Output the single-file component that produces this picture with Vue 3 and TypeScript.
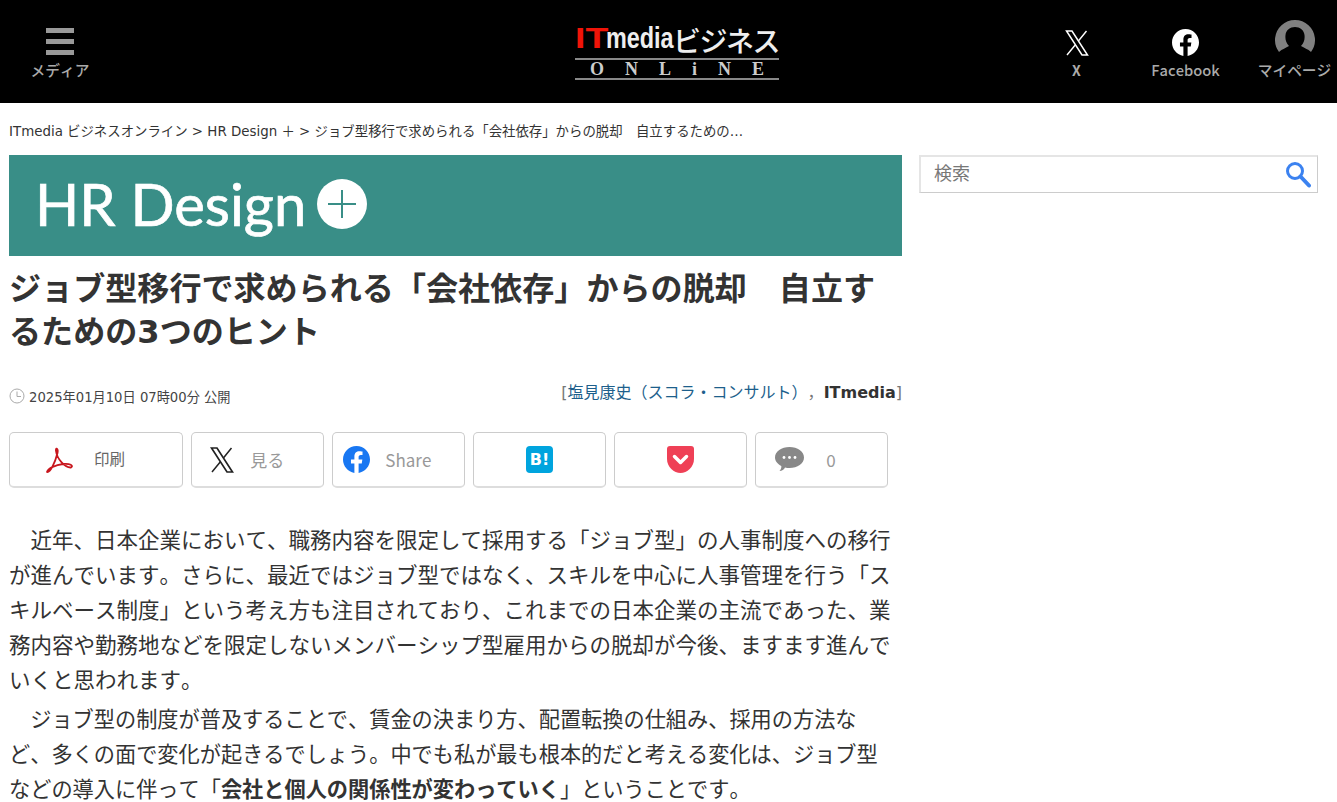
<script setup lang="ts">
const fbPath = 'M24 12.073c0-6.627-5.373-12-12-12s-12 5.373-12 12c0 5.99 4.388 10.954 10.125 11.854v-8.385H7.078v-3.47h3.047V9.43c0-3.007 1.792-4.669 4.533-4.669 1.312 0 2.686.235 2.686.235v2.953H15.83c-1.491 0-1.956.925-1.956 1.874v2.25h3.328l-.532 3.47h-2.796v8.385C19.612 23.027 24 18.062 24 12.073z'
</script>

<template>
  <div class="page">
    <header class="header">
      <div class="nav-item menu">
        <div class="burger"><i></i><i></i><i></i></div>
        <span class="nav-label">メディア</span>
      </div>
      <div class="logo">
        <div class="logo-top"><span class="logo-it">IT</span><span class="logo-media">media</span><span class="logo-biz">ビジネス</span></div>
        <div class="logo-online"><span>O</span><span>N</span><span>L</span><span>i</span><span>N</span><span>E</span></div>
      </div>
      <div class="nav-right">
        <div class="nav-item nav-x">
          <svg class="nav-icon" width="24" height="26" viewBox="0 0 24 26" fill="none" stroke="#fff">
            <path d="M1.500 1H7L22.500 25H17Z" stroke-width="1.500" />
            <path d="M21.500 1L13.600 10.800M10.200 15L2 25" stroke-width="1.400" />
          </svg>
          <span class="nav-label strong">X</span>
        </div>
        <div class="nav-item nav-fb">
          <svg class="nav-icon" width="27" height="27" viewBox="0 0 24 24"><path :d="fbPath" fill="#fff" /></svg>
          <span class="nav-label">Facebook</span>
        </div>
        <div class="nav-item nav-my">
          <svg class="nav-icon" width="40" height="36" viewBox="0 0 40 36">
            <path d="M4 32A20 20 0 1 1 36 32C33 29 29 28 26 26C29 23 30 19 29.500 15C29 10 25 7 20 7S11 10 10.500 15C10 19 11 23 14 26C11 28 7 29 4 32Z" fill="#808080" />
          </svg>
          <span class="nav-label">マイページ</span>
        </div>
      </div>
    </header>

    <nav class="crumbs">ITmedia ビジネスオンライン &gt; HR Design ＋ &gt; ジョブ型移行で求められる「会社依存」からの脱却　自立するための…</nav>

    <div class="columns">
      <main class="article">
        <div class="banner">
          <span class="banner-text">HR Design</span>
          <svg width="50" height="50" viewBox="0 0 50 50">
            <circle cx="25" cy="25" r="25" fill="#fff" />
            <path d="M25 11V39M11 25H39" stroke="#398e87" stroke-width="2" />
          </svg>
        </div>

        <h1 class="title">ジョブ型移行で求められる「会社依存」からの脱却　自立するための3つのヒント</h1>

        <div class="meta">
          <div class="date">
            <svg width="16" height="16" viewBox="0 0 16 16" fill="none" stroke="#aaa" stroke-width="1">
              <circle cx="8" cy="8" r="7" />
              <path d="M8 3.500V8.500H12" />
            </svg>
            <span>2025年01月10日 07時00分 公開</span>
          </div>
          <div class="author">[<a>塩見康史（スコラ・コンサルト）</a>，<b>ITmedia</b>]</div>
        </div>

        <div class="shares">
          <div class="share share-print">
            <svg width="28" height="28" viewBox="0 0 28 28" fill="none" stroke="#c8161d" stroke-width="1.800" stroke-linejoin="round">
              <path d="M2 26C5 27 10 17 12.500 7C13.500 2 10.500 1 11 5C12 13 20 22 26 21.500C29 20 25 17 18 18C11 19 3 22 2 26Z" />
            </svg>
            <span class="share-text up">印刷</span>
          </div>
          <div class="share share-x">
            <svg width="24" height="26" viewBox="0 0 24 26" fill="none" stroke="#222">
              <path d="M1.500 1H7L22.500 25H17Z" stroke-width="1.700" />
              <path d="M21.500 1L13.600 10.800M10.200 15L2 25" stroke-width="1.500" />
            </svg>
            <span class="share-text light">見る</span>
          </div>
          <div class="share share-fb">
            <svg width="27" height="27" viewBox="0 0 24 24"><path :d="fbPath" fill="#1877f2" /></svg>
            <span class="share-text light">Share</span>
          </div>
          <div class="share center">
            <div class="hatena">B!</div>
          </div>
          <div class="share center">
            <svg width="27" height="27" viewBox="0 0 27 27">
              <path d="M0 3A3 3 0 0 1 3 0H24A3 3 0 0 1 27 3V13C27 21 20 27 13.500 27S0 21 0 13Z" fill="#ef4056" />
              <path d="M7.500 10.500L13.500 16.500L19.500 10.500" fill="none" stroke="#fff" stroke-width="3.500" stroke-linecap="round" stroke-linejoin="round" />
            </svg>
          </div>
          <div class="share share-comment">
            <svg width="29" height="27" viewBox="0 0 29 27">
              <path d="M14.500 1C22.500 1 29 5.500 29 11.500S22.500 22 14.500 22C13 22 11.500 21.900 10 21.500C9 23.500 7 25 4.500 25C6 23.500 6.500 21.500 6.300 20C2.500 18 0 15 0 11.500C0 5.500 6.500 1 14.500 1Z" fill="#888" />
              <circle cx="9" cy="11.500" r="1.400" fill="#fff" /><circle cx="14.500" cy="11.500" r="1.400" fill="#fff" /><circle cx="20" cy="11.500" r="1.400" fill="#fff" />
            </svg>
            <span class="share-text light">0</span>
          </div>
        </div>

        <div class="body-text">
          <p class="lead">　近年、日本企業において、職務内容を限定して採用する「ジョブ型」の人事制度への移行が進んでいます。さらに、最近ではジョブ型ではなく、スキルを中心に人事管理を行う「スキルベース制度」という考え方も注目されており、これまでの日本企業の主流であった、業務内容や勤務地などを限定しないメンバーシップ型雇用からの脱却が今後、ますます進んでいくと思われます。</p>
          <p class="next">　ジョブ型の制度が普及することで、賃金の決まり方、配置転換の仕組み、採用の方法など、多くの面で変化が起きるでしょう。中でも私が最も根本的だと考える変化は、ジョブ型などの導入に伴って「<b>会社と個人の関係性が変わっていく</b>」ということです。</p>
        </div>
      </main>

      <aside class="side">
        <div class="search">
          <span class="search-text">検索</span>
          <svg width="26" height="27" viewBox="0 0 26 27" fill="none" stroke="#3b82f0">
            <circle cx="10" cy="10" r="7.500" stroke-width="3" />
            <path d="M15.500 15.500L24 24.500" stroke-width="4" stroke-linecap="round" />
          </svg>
        </div>
      </aside>
    </div>
  </div>
</template>

<style>
html, body { margin: 0; background: #fff; }
</style>

<style scoped>
.page {
  height: 802px;
  overflow: hidden;
  font-family: "DejaVu Sans", "Noto Sans CJK JP", sans-serif;
  font-kerning: none;
  text-spacing-trim: space-all;
  color: #333;
}
.header {
  height: 103px;
  background: #000;
  display: flex;
  overflow: hidden;
}
.nav-item {
  display: flex;
  flex-direction: column;
  align-items: center;
  justify-content: flex-end;
  padding-bottom: 23px;
  box-sizing: border-box;
  height: 103px;
}
.menu { width: 120px; flex: none; }
.burger { display: flex; flex-direction: column; gap: 6px; margin-bottom: 5px; }
.burger i { display: block; width: 28px; height: 5px; background: #999; }
.nav-label {
  font-family: "Noto Sans CJK JP", sans-serif;
  font-size: 14.700px;
  font-weight: 500;
  line-height: 20px;
  color: #aaa;
  white-space: nowrap;
}
.nav-label.strong { font-weight: 700; font-size: 14px; }
.nav-icon { display: block; margin-bottom: 4px; }
.logo { margin-left: 455px; width: 204px; padding-top: 22px; flex: none; }
.logo-top {
  height: 36px;
  display: flex;
  align-items: center;
  white-space: nowrap;
  color: #eee;
  line-height: 36px;
}
.logo-it {
  font: 700 30px/36px "Liberation Sans", sans-serif;
  color: #f01408;
  display: inline-block;
  width: 31px;
  transform: scaleX(1.25);
  transform-origin: left center;
  margin-top: -4px;
}
.logo-media {
  font: 700 30px/36px "Liberation Sans", sans-serif;
  display: inline-block;
  width: 63px;
  transform: scaleX(0.78);
  transform-origin: left center;
  margin-top: -4px;
}
.logo-biz {
  font-family: "Noto Sans CJK JP", sans-serif;
  font-size: 28px;
  font-weight: 500;
  letter-spacing: -1.500px;
  margin-left: 4px;
}
.logo-online {
  display: flex;
  justify-content: space-between;
  padding: 0 15px;
  height: 18px;
  border-top: 2px solid #888;
  border-bottom: 2px solid #888;
  font: 700 18px/18px "Liberation Serif", serif;
  color: #ccc;
}
.nav-right { margin-left: auto; display: flex; padding-right: 5px; }
.nav-x { width: 109px; }
.nav-fb { width: 109px; margin-right: 17px; }
.nav-my { width: 75px; }
.crumbs {
  height: 52px;
  line-height: 58px;
  padding-left: 9px;
  font-size: 13.400px;
  white-space: nowrap;
}
.columns { display: flex; padding-left: 9px; }
.article { width: 893px; flex: none; }
.banner {
  height: 101px;
  background: #398e87;
  display: flex;
  align-items: center;
  padding-left: 26px;
  color: #fff;
  gap: 11px;
}
.banner-text {
  font: 400 58px/70px Lato, sans-serif;
  -webkit-text-stroke: 0.7px #fff;
  margin-top: -3px;
}
.banner svg { margin-top: -3px; }
.title {
  margin: 12px 0 0;
  font-size: 32.100px;
  line-height: 43px;
  font-weight: 700;
  color: #333;
}
.meta {
  display: flex;
  justify-content: space-between;
  margin-top: 26px;
  height: 52px;
}
.date {
  display: flex;
  align-items: center;
  gap: 4px;
  font-size: 13.200px;
  color: #444;
  height: 24px;
  margin-top: 4px;
}
.author { font-size: 16px; line-height: 24px; margin-top: 1px; color: #777; }
.author a { color: #1d5f8c; }
.author b { color: #333; }
.shares { display: flex; gap: 8.300px; }
.share {
  height: 56px;
  width: 132.700px;
  box-sizing: border-box;
  border: 1px solid #ccc;
  border-bottom: 2px solid #ddd;
  border-radius: 5px;
  background: #fff;
  display: flex;
  align-items: center;
  flex: none;
}
.center { justify-content: center; }
.share-print { width: 174px; padding-left: 35px; gap: 21px; }
.share-x { padding-left: 18px; gap: 16px; }
.share-fb { padding-left: 10px; gap: 15px; }
.share-comment { padding-left: 19px; gap: 22px; }
.share-text { font-family: "Noto Sans CJK JP", sans-serif; font-size: 15.500px; color: #666; }
.share-text.up { margin-top: -3px; }
.share-text.light { color: #999; font-size: 17px; margin-top: -1px; }
.hatena {
  width: 27px;
  height: 27px;
  border-radius: 4px;
  background: #00a4de;
  color: #fff;
  font: 700 16px/27px "DejaVu Sans", sans-serif;
  text-align: center;
}
.body-text { margin-top: 35px; width: 885px; line-height: 35px; color: #333; }
.body-text p { margin: 0 0 4px; }
.lead { font-size: 21.500px; }
.next { font-size: 21.200px; }
.side { margin-left: 17px; width: 399px; }
.search {
  box-sizing: border-box;
  height: 38px;
  border: 2px solid #e5e5e5;
  border-right: 1px solid #ccc;
  border-bottom: 1px solid #ccc;
  display: flex;
  align-items: center;
  justify-content: space-between;
  padding: 0 6px 0 13px;
}
.search-text { font-family: "Noto Sans CJK JP", sans-serif; font-size: 18px; color: #777; margin-top: -5px; }
</style>
